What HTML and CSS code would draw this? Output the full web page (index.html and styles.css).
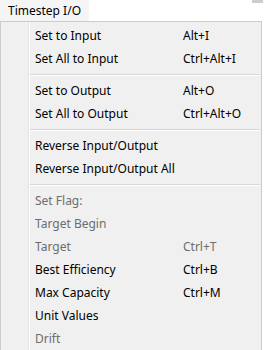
FILE: index.html
```html
<!DOCTYPE html>
<html lang="en">
<head>
  <meta charset="UTF-8">
  <title>Timestep I/O</title>
  <link rel="stylesheet" href="styles.css">
</head>
<body>
  <div class="menubar">
    <div class="menubar-item">Timestep I/O</div>
    <div class="menubar-fill"></div>
    <div class="scroll-stub"></div>
  </div>

  <div class="menu">
    <div class="item"><span class="label">Set to Input</span><span class="key">Alt+I</span></div>
    <div class="item"><span class="label">Set All to Input</span><span class="key">Ctrl+Alt+I</span></div>
    <div class="sep"></div>
    <div class="item"><span class="label">Set to Output</span><span class="key">Alt+O</span></div>
    <div class="item"><span class="label">Set All to Output</span><span class="key">Ctrl+Alt+O</span></div>
    <div class="sep"></div>
    <div class="item"><span class="label">Reverse Input/Output</span></div>
    <div class="item"><span class="label">Reverse Input/Output All</span></div>
    <div class="sep"></div>
    <div class="item disabled"><span class="label">Set Flag:</span></div>
    <div class="item disabled"><span class="label">Target Begin</span></div>
    <div class="item disabled"><span class="label">Target</span><span class="key">Ctrl+T</span></div>
    <div class="item"><span class="label">Best Efficiency</span><span class="key">Ctrl+B</span></div>
    <div class="item"><span class="label">Max Capacity</span><span class="key">Ctrl+M</span></div>
    <div class="item"><span class="label">Unit Values</span></div>
    <div class="item disabled"><span class="label">Drift</span></div>
  </div>
</body>
</html>
```

FILE: styles.css
```css
/* General Styles */
body {
  margin: 0;
  background: #fff;
  font-family: "Noto Sans", "Open Sans", sans-serif;
  font-size: 12px;
  color: #000;
  overflow: hidden;
}

.menubar {
  display: flex;
  height: 21px;
}

.menubar-item {
  width: 89px;
  padding-left: 8px;
  box-sizing: border-box;
  line-height: 21px;
  background: #f5f5f5;
}

.menubar-fill {
  flex: 1;
}

.scroll-stub {
  width: 11px;
  height: 3px;
  margin-right: 1px;
  background: #cdcdcd;
}

.menu {
  width: 262px;
  box-sizing: border-box;
  border: 1px solid #cccccc;
  padding-top: 2px;
  background: linear-gradient(to right, #f0f0f0 0 27px, #e2e3e3 27px 28px, #ffffff 28px 29px, #f0f0f0 29px);
}

.item {
  display: flex;
  height: 23px;
  line-height: 23px;
  padding-left: 34px;
  white-space: nowrap;
}

.label {
  width: 148px;
}

.disabled {
  color: #6d6d6d;
}

.sep {
  height: 1px;
  margin: 4px 1px 3px 29px;
  background: #d7d7d7;
  border-bottom: 1px solid #ffffff;
}
```
